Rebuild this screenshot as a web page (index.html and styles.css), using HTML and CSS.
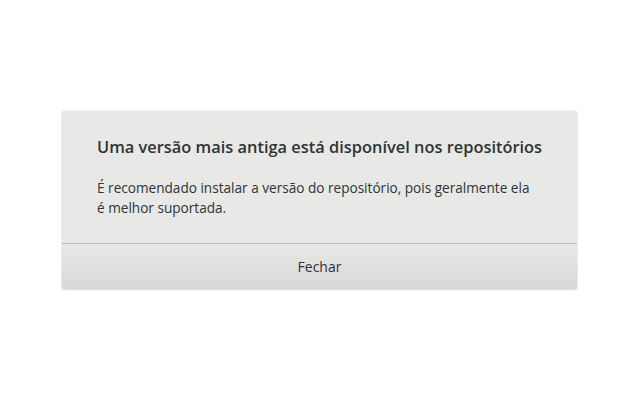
FILE: index.html
```html
<!DOCTYPE html>
<html lang="pt">
<head>
    <meta charset="UTF-8">
    <title>Versão antiga disponível</title>
    <link rel="stylesheet" href="styles.css">
</head>
<body>
    <div class="dialog">
        <div class="dialog-content">
            <h1 class="dialog-title">Uma versão mais antiga está disponível nos repositórios</h1>
            <p class="dialog-text">É recomendado instalar a versão do repositório, pois geralmente ela é melhor suportada.</p>
        </div>
        <button class="dialog-button">Fechar</button>
    </div>
</body>
</html>
```

FILE: styles.css
```css
* {
    margin: 0;
    padding: 0;
    box-sizing: border-box;
}
body {
    height: 100vh;
    display: flex;
    align-items: center;
    justify-content: center;
    background: #ffffff;
    font-family: "Open Sans", "Noto Sans", sans-serif;
    color: #2e3436;
}
.dialog {
    width: 515px;
    height: 178px;
    margin-left: -1px;
    display: flex;
    flex-direction: column;
    background: #e8e8e7;
    border-radius: 3px;
    box-shadow: 0 0 0 1px rgba(0, 0, 0, 0.05), 0 1px 2px rgba(0, 0, 0, 0.12);
    overflow: hidden;
}
.dialog-content {
    height: 133px;
    padding: 25px 30px 0 35px;
    border-bottom: 1px solid #b8b8b5;
}
.dialog-title {
    font-size: 16.4px;
    font-weight: 600;
    line-height: 22px;
    margin-bottom: 20px;
    white-space: nowrap;
}
.dialog-text {
    max-width: 438px;
    font-size: 13.6px;
    line-height: 20px;
}
.dialog-button {
    flex: 1;
    border: none;
    background: linear-gradient(to bottom, #e8e8e7, #d8d8d6);
    font-family: inherit;
    font-size: 14px;
    color: #2e3436;
}
```
